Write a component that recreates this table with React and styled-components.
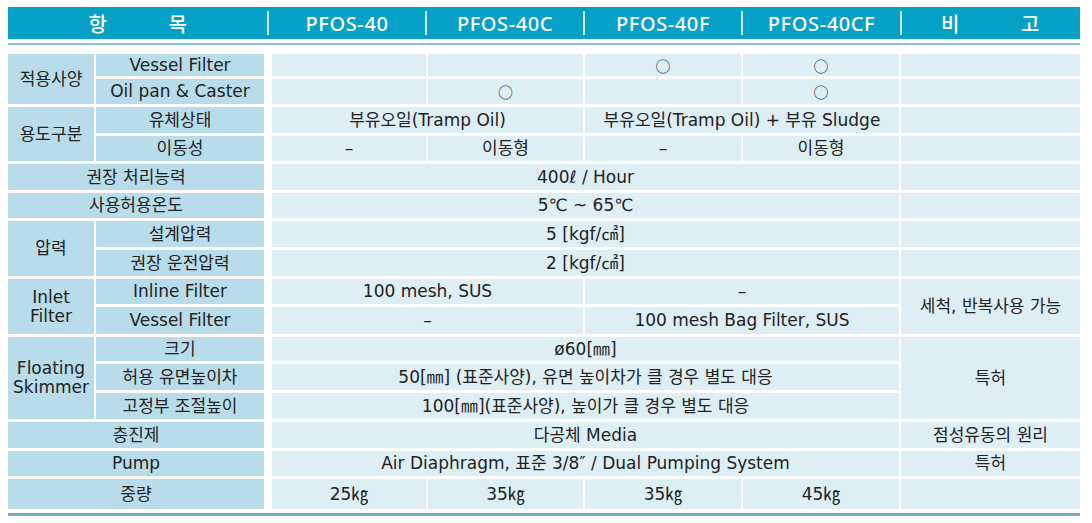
import React from "react";
import styled, { createGlobalStyle } from "styled-components";

const Global = createGlobalStyle`
  html, body { margin: 0; padding: 0; background: #ffffff; }
  body { font-family: "DejaVu Sans", "Noto Sans CJK KR", sans-serif; }
`;

const Page = styled.div`
  width: 1072px;
  padding: 7px 0 0 8px;
`;

const HeaderBar = styled.div`
  display: grid;
  grid-template-columns: 260px 158px 158px 158px 159px 179px;
  height: 32px;
  background: #05a0c5;
`;

const HeaderCell = styled.div`
  position: relative;
  display: flex;
  align-items: center;
  justify-content: center;
  gap: ${(p) => p.$gap || 0}px;
  color: #ffffff;
  font-family: "Noto Sans", "Noto Sans CJK KR", sans-serif;
  font-weight: 500;
  font-size: 20px;
  letter-spacing: 0.6px;
  padding-top: 1px;
  &::before {
    content: "";
    display: ${(p) => (p.$sep ? "block" : "none")};
    position: absolute;
    left: -1px;
    top: 4px;
    bottom: 4px;
    width: 2px;
    background: #cfeaf3;
  }
`;

const HeaderRule = styled.div`
  margin-top: 4px;
  height: 2px;
  background: #86c6db;
`;

const Table = styled.div`
  margin-top: 9px;
  display: grid;
  grid-template-columns: 86px 168px 4px 154px 155px 156px 156px 179px;
  grid-template-rows: 22px 25px 26px 25px 26px 25px 26px 26px 25px 27px 24px 26px 26px 26px 25px 30px;
  column-gap: 2px;
  row-gap: 3px;
`;

const Cell = styled.div`
  grid-row: ${(p) => p.$r} / span ${(p) => p.$rs || 1};
  grid-column: ${(p) => p.$c} / span ${(p) => p.$cs || 1};
  display: flex;
  align-items: center;
  justify-content: center;
  text-align: center;
  background: ${(p) => (p.$label ? "#b8dcea" : "#ddeef5")};
  color: #222222;
  font-size: 17px;
  line-height: 19px;
  white-space: pre-line;
`;

const Mark = styled.span`
  font-family: "Noto Sans CJK KR", sans-serif;
  font-size: 15px;
  color: #333;
`;

const BottomRule = styled.div`
  margin-top: 4px;
  height: 3px;
  background: #6aafc6;
`;

const O = "○";

const cells = [
  { r: 1, c: 1, rs: 2, l: 1, t: "적용사양" },
  { r: 1, c: 2, l: 1, t: "Vessel Filter" },
  { r: 1, c: 4, t: "" },
  { r: 1, c: 5, t: "" },
  { r: 1, c: 6, t: O },
  { r: 1, c: 7, t: O },
  { r: 1, c: 8, t: "" },
  { r: 2, c: 2, l: 1, t: "Oil pan & Caster" },
  { r: 2, c: 4, t: "" },
  { r: 2, c: 5, t: O },
  { r: 2, c: 6, t: "" },
  { r: 2, c: 7, t: O },
  { r: 2, c: 8, t: "" },
  { r: 3, c: 1, rs: 2, l: 1, t: "용도구분" },
  { r: 3, c: 2, l: 1, t: "유체상태" },
  { r: 3, c: 4, cs: 2, t: "부유오일(Tramp Oil)" },
  { r: 3, c: 6, cs: 2, t: "부유오일(Tramp Oil) + 부유 Sludge" },
  { r: 3, c: 8, t: "" },
  { r: 4, c: 2, l: 1, t: "이동성" },
  { r: 4, c: 4, t: "–" },
  { r: 4, c: 5, t: "이동형" },
  { r: 4, c: 6, t: "–" },
  { r: 4, c: 7, t: "이동형" },
  { r: 4, c: 8, t: "" },
  { r: 5, c: 1, cs: 2, l: 1, t: "권장  처리능력" },
  { r: 5, c: 4, cs: 4, t: "400ℓ / Hour" },
  { r: 5, c: 8, t: "" },
  { r: 6, c: 1, cs: 2, l: 1, t: "사용허용온도" },
  { r: 6, c: 4, cs: 4, t: "5℃ ~ 65℃" },
  { r: 6, c: 8, t: "" },
  { r: 7, c: 1, rs: 2, l: 1, t: "압력" },
  { r: 7, c: 2, l: 1, t: "설계압력" },
  { r: 7, c: 4, cs: 4, t: "5 [kgf/㎠]" },
  { r: 7, c: 8, t: "" },
  { r: 8, c: 2, l: 1, t: "권장 운전압력" },
  { r: 8, c: 4, cs: 4, t: "2 [kgf/㎠]" },
  { r: 8, c: 8, t: "" },
  { r: 9, c: 1, rs: 2, l: 1, t: "Inlet\nFilter" },
  { r: 9, c: 2, l: 1, t: "Inline Filter" },
  { r: 9, c: 4, cs: 2, t: "100 mesh, SUS" },
  { r: 9, c: 6, cs: 2, t: "–" },
  { r: 9, c: 8, rs: 2, t: "세척, 반복사용 가능" },
  { r: 10, c: 2, l: 1, t: "Vessel Filter" },
  { r: 10, c: 4, cs: 2, t: "–" },
  { r: 10, c: 6, cs: 2, t: "100 mesh Bag Filter, SUS" },
  { r: 11, c: 1, rs: 3, l: 1, t: "Floating\nSkimmer" },
  { r: 11, c: 2, l: 1, t: "크기" },
  { r: 11, c: 4, cs: 4, t: "ø60[㎜]" },
  { r: 11, c: 8, rs: 3, t: "특허" },
  { r: 12, c: 2, l: 1, t: "허용 유면높이차" },
  { r: 12, c: 4, cs: 4, t: "50[㎜] (표준사양), 유면 높이차가 클 경우 별도 대응" },
  { r: 13, c: 2, l: 1, t: "고정부 조절높이" },
  { r: 13, c: 4, cs: 4, t: "100[㎜](표준사양), 높이가 클 경우 별도 대응" },
  { r: 14, c: 1, cs: 2, l: 1, t: "충진제" },
  { r: 14, c: 4, cs: 4, t: "다공체 Media" },
  { r: 14, c: 8, t: "점성유동의 원리" },
  { r: 15, c: 1, cs: 2, l: 1, t: "Pump" },
  { r: 15, c: 4, cs: 4, t: "Air Diaphragm, 표준 3/8″ / Dual Pumping System" },
  { r: 15, c: 8, t: "특허" },
  { r: 16, c: 1, cs: 2, l: 1, t: "중량" },
  { r: 16, c: 4, t: "25㎏" },
  { r: 16, c: 5, t: "35㎏" },
  { r: 16, c: 6, t: "35㎏" },
  { r: 16, c: 7, t: "45㎏" },
  { r: 16, c: 8, t: "" },
];

const headers = ["PFOS-40", "PFOS-40C", "PFOS-40F", "PFOS-40CF"];

export default function App() {
  return (
    <>
      <Global />
      <Page>
        <HeaderBar>
          <HeaderCell $gap={61}>
            <span>항</span>
            <span>목</span>
          </HeaderCell>
          {headers.map((h) => (
            <HeaderCell key={h} $sep>
              {h}
            </HeaderCell>
          ))}
          <HeaderCell $sep $gap={61}>
            <span>비</span>
            <span>고</span>
          </HeaderCell>
        </HeaderBar>
        <HeaderRule />
        <Table>
          {cells.map((x, i) => (
            <Cell key={i} $r={x.r} $c={x.c} $rs={x.rs} $cs={x.cs} $label={x.l}>
              {x.t === O ? <Mark>{O}</Mark> : x.t}
            </Cell>
          ))}
        </Table>
        <BottomRule />
      </Page>
    </>
  );
}
